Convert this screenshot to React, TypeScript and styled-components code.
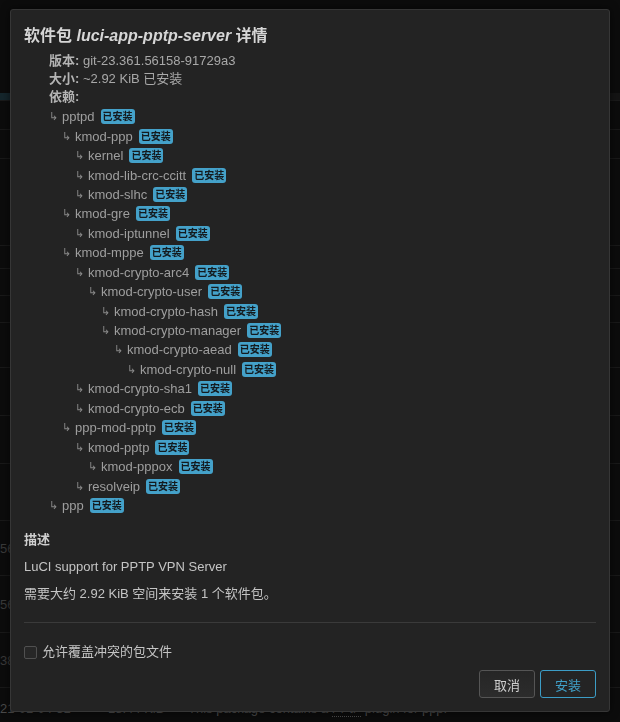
import React from "react";
import styled, { createGlobalStyle } from "styled-components";

const Global = createGlobalStyle`
  html, body { margin: 0; padding: 0; background: #0b0b0b; }
  body {
    font-family: "Liberation Sans", "Noto Sans CJK SC", Arial, sans-serif;
    font-size: 13px;
    color: #bbb;
    overflow: hidden;
  }
`;

/* ---------- background page (under the overlay) ---------- */
const Page = styled.div`
  width: 620px;
  height: 722px;
  display: flex;
  flex-direction: column;
  background: #0c0c0c;
`;

const TopBar = styled.div`
  height: 93px;
`;

const TabLine = styled.div`
  height: 7px;
  background: linear-gradient(to right, #15262c 0 10px, #0c0c0c 10px 610px, #141414 610px);
  border-bottom: 1px solid #1a1a1a;
`;

const BgRow = styled.div<{ $h: number }>`
  height: ${(p) => p.$h}px;
  box-sizing: border-box;
  border-bottom: 1px solid #191919;
  display: flex;
  align-items: center;
  font-size: 13px;
  color: #3a3a3a;
  white-space: nowrap;
  overflow: hidden;
`;

const BgCell = styled.span<{ $w: number }>`
  width: ${(p) => p.$w}px;
  flex: none;
`;

const BgLast = styled.div`
  flex: 1;
  display: flex;
  align-items: center;
  font-size: 13px;
  color: #4a4a4a;
  white-space: nowrap;
  padding-top: 6px;
`;

const BgLink = styled.span`
  border-bottom: 1px dotted #4a4a4a;
`;

/* ---------- modal ---------- */
const Overlay = styled.div`
  position: fixed;
  inset: 0;
`;

const Modal = styled.div`
  position: absolute;
  left: 10px;
  top: 9px;
  width: 600px;
  height: 703px;
  box-sizing: border-box;
  background: #232323;
  border: 1px solid #363636;
  border-radius: 3px;
  padding: 14px 13px 13px 13px;
  display: flex;
  flex-direction: column;
  box-shadow: 0 0 8px rgba(0, 0, 0, 0.6);
`;

const Title = styled.h4`
  margin: 0;
  font-size: 16px;
  line-height: 24px;
  font-weight: bold;
  color: #d6d6d6;
`;

const PkgName = styled.em`
  font-style: italic;
`;

const Info = styled.div`
  padding-left: 25px;
  margin-top: 4px;
  color: #a8a8a8;
  font-size: 13px;
  line-height: 18px;
`;

const Label = styled.strong`
  font-weight: bold;
  color: #b4b4b4;
`;

const Tree = styled.ul`
  list-style: none;
  margin: 1px 0 0;
  padding: 0 0 0 25px;
`;

const Node = styled.li<{ $lvl: number }>`
  height: 19.45px;
  display: flex;
  align-items: center;
  padding-left: ${(p) => p.$lvl * 13}px;
  color: #9e9e9e;
  font-size: 13px;
  white-space: nowrap;
`;

const Arrow = styled.span`
  width: 13px;
  flex: none;
  font-size: 11px;
  color: #888;
`;

const Badge = styled.span`
  margin-left: 6px;
  background: #44a1c9;
  color: #141a1e;
  font-size: 10px;
  font-weight: bold;
  line-height: 15px;
  padding: 0 2px;
  border-radius: 3px;
`;

const Section = styled.div`
  margin-top: 15px;
`;

const H5 = styled.h5`
  margin: 0;
  font-size: 13px;
  line-height: 20px;
  font-weight: bold;
  color: #cfcfcf;
`;

const P = styled.p`
  margin: 7px 0 0;
  font-size: 13px;
  line-height: 20px;
  color: #c4c4c4;
`;

const Hr = styled.hr`
  margin: 18px 0 0;
  border: 0;
  border-top: 1px solid #3a3a3a;
`;

const CheckRow = styled.label`
  margin-top: 20px;
  display: flex;
  align-items: center;
  gap: 5px;
  font-size: 13px;
  line-height: 18px;
  color: #c4c4c4;
`;

const Box = styled.span`
  width: 13px;
  height: 13px;
  box-sizing: border-box;
  border: 1px solid #505050;
  border-radius: 2px;
  background: #272727;
`;

const Footer = styled.div`
  margin-top: auto;
  display: flex;
  justify-content: flex-end;
  gap: 5px;
`;

const Btn = styled.button<{ $primary?: boolean }>`
  width: 56px;
  height: 28px;
  box-sizing: border-box;
  border-radius: 3px;
  border: 1px solid ${(p) => (p.$primary ? "#3c9dc6" : "#555")};
  background: ${(p) => (p.$primary ? "#242424" : "linear-gradient(#262626, #2c2c2c)")};
  color: ${(p) => (p.$primary ? "#40a0c8" : "#cfcfcf")};
  font-family: inherit;
  font-size: 13px;
  padding: 0;
`;

type Dep = { name: string; lvl: number };

const deps: Dep[] = [
  { name: "pptpd", lvl: 0 },
  { name: "kmod-ppp", lvl: 1 },
  { name: "kernel", lvl: 2 },
  { name: "kmod-lib-crc-ccitt", lvl: 2 },
  { name: "kmod-slhc", lvl: 2 },
  { name: "kmod-gre", lvl: 1 },
  { name: "kmod-iptunnel", lvl: 2 },
  { name: "kmod-mppe", lvl: 1 },
  { name: "kmod-crypto-arc4", lvl: 2 },
  { name: "kmod-crypto-user", lvl: 3 },
  { name: "kmod-crypto-hash", lvl: 4 },
  { name: "kmod-crypto-manager", lvl: 4 },
  { name: "kmod-crypto-aead", lvl: 5 },
  { name: "kmod-crypto-null", lvl: 6 },
  { name: "kmod-crypto-sha1", lvl: 2 },
  { name: "kmod-crypto-ecb", lvl: 2 },
  { name: "ppp-mod-pptp", lvl: 1 },
  { name: "kmod-pptp", lvl: 2 },
  { name: "kmod-pppox", lvl: 3 },
  { name: "resolveip", lvl: 2 },
  { name: "ppp", lvl: 0 },
];

const bgRows: { h: number; t?: string }[] = [
  { h: 29 },
  { h: 29 },
  { h: 87 },
  { h: 23 },
  { h: 27 },
  { h: 27 },
  { h: 45 },
  { h: 48 },
  { h: 48 },
  { h: 57 },
  { h: 55, t: "56" },
  { h: 57, t: "56" },
  { h: 55, t: "38" },
];

export default function App() {
  return (
    <>
      <Global />
      <Page>
        <TopBar />
        <TabLine />
        {bgRows.map((r, i) => (
          <BgRow key={i} $h={r.h}>
            <BgCell $w={100}>{r.t ?? ""}</BgCell>
          </BgRow>
        ))}
        <BgLast>
          <BgCell $w={108}>21-01-04-31</BgCell>
          <BgCell $w={80}>18.44 KiB</BgCell>
          <span>
            This package contains a <BgLink>PPtP</BgLink> plugin for ppp.
          </span>
        </BgLast>
      </Page>
      <Overlay>
        <Modal>
          <Title>
            软件包 <PkgName>luci-app-pptp-server</PkgName> 详情
          </Title>
          <Info>
            <div>
              <Label>版本:</Label> git-23.361.56158-91729a3
            </div>
            <div>
              <Label>大小:</Label> ~2.92 KiB 已安装
            </div>
            <div>
              <Label>依赖:</Label>
            </div>
          </Info>
          <Tree>
            {deps.map((d) => (
              <Node key={d.name + d.lvl} $lvl={d.lvl}>
                <Arrow>↳</Arrow>
                {d.name}
                <Badge>已安装</Badge>
              </Node>
            ))}
          </Tree>
          <Section>
            <H5>描述</H5>
            <P>LuCI support for PPTP VPN Server</P>
            <P>需要大约 2.92 KiB 空间来安装 1 个软件包。</P>
          </Section>
          <Hr />
          <CheckRow>
            <Box />
            允许覆盖冲突的包文件
          </CheckRow>
          <Footer>
            <Btn>取消</Btn>
            <Btn $primary>安装</Btn>
          </Footer>
        </Modal>
      </Overlay>
    </>
  );
}
